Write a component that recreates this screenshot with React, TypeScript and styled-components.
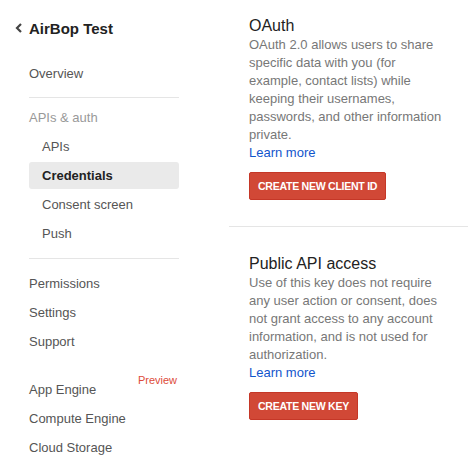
import * as React from "react";
import styled, { createGlobalStyle } from "styled-components";

const GlobalStyle = createGlobalStyle`
  body {
    margin: 0;
    background: #fff;
    font-family: "Liberation Sans", Arial, sans-serif;
  }
`;

const Page = styled.div`
  display: flex;
  width: 468px;
  height: 462px;
  overflow: hidden;
`;

const Sidebar = styled.nav`
  width: 229px;
  flex-shrink: 0;
  padding-left: 29px;
  box-sizing: border-box;
`;

const Header = styled.div`
  display: flex;
  align-items: center;
  height: 20px;
  margin: 18px 0 0 -14px;
  font-size: 15px;
  font-weight: bold;
  color: #222;
`;

const Back = styled.svg`
  width: 8px;
  height: 10px;
  margin-right: 6px;
`;

const Menu = styled.div`
  width: 150px;
  margin-top: 21px;
`;

const Item = styled.div<{ $sub?: boolean; $active?: boolean; $muted?: boolean }>`
  position: relative;
  height: 29px;
  line-height: 29px;
  font-size: 13px;
  padding-left: ${p => (p.$sub ? "13px" : "0")};
  color: ${p => (p.$muted ? "#999" : p.$active ? "#222" : "#555")};
  font-weight: ${p => (p.$active ? "bold" : "normal")};
  background: ${p => (p.$active ? "#eaeaea" : "transparent")};
  border-radius: 3px;
  ${p => (p.$active ? "height: 27px; line-height: 27px; margin: 1px 0;" : "")}
`;

const Divider = styled.div<{ $top: number; $bottom: number }>`
  height: 1px;
  background: #e5e5e5;
  margin: ${p => `${p.$top}px 0 ${p.$bottom}px`};
`;

const Gap = styled.div`
  height: 19px;
`;

const Badge = styled.span`
  position: absolute;
  right: 2px;
  top: -9px;
  font-size: 11px;
  color: #dd4b39;
  font-weight: normal;
`;

const Main = styled.main`
  flex: 1;
`;

const Section = styled.section<{ $divided?: boolean }>`
  padding: 16px 0 0 20px;
  height: ${p => (p.$divided ? "210px" : "auto")};
  border-bottom: ${p => (p.$divided ? "1px solid #e5e5e5" : "none")};
  ${p => (p.$divided ? "" : "padding-top: 27px;")}
`;

const Title = styled.h2`
  margin: 0;
  font-size: 16px;
  line-height: 20px;
  font-weight: normal;
  color: #222;
`;

const Desc = styled.p`
  margin: 0;
  width: 200px;
  font-size: 13px;
  line-height: 18px;
  color: #777;
`;

const Link = styled.a`
  display: block;
  font-size: 13px;
  line-height: 18px;
  color: #15c;
  text-decoration: none;
`;

const Button = styled.button`
  margin-top: 10px;
  height: 28px;
  padding: 0 8px;
  border: 1px solid #c53727;
  border-radius: 2px;
  background: #d14836;
  color: #fff;
  font-family: "Liberation Sans", Arial, sans-serif;
  font-size: 10.6px;
  letter-spacing: -0.3px;
  font-weight: bold;
  text-transform: uppercase;
  cursor: pointer;
`;

export default function App() {
  return (
    <Page>
      <GlobalStyle />
      <Sidebar>
        <Header>
          <Back viewBox="0 0 8 10">
            <polyline points="6,1 2,5 6,9" fill="none" stroke="#444" strokeWidth="2.2" />
          </Back>
          AirBop Test
        </Header>
        <Menu>
          <Item>Overview</Item>
          <Divider $top={9} $bottom={5} />
          <Item $muted>APIs &amp; auth</Item>
          <Item $sub>APIs</Item>
          <Item $sub $active>Credentials</Item>
          <Item $sub>Consent screen</Item>
          <Item $sub>Push</Item>
          <Divider $top={10} $bottom={10} />
          <Item>Permissions</Item>
          <Item>Settings</Item>
          <Item>Support</Item>
          <Gap />
          <Item>
            App Engine
            <Badge>Preview</Badge>
          </Item>
          <Item>Compute Engine</Item>
          <Item>Cloud Storage</Item>
        </Menu>
      </Sidebar>
      <Main>
        <Section $divided>
          <Title>OAuth</Title>
          <Desc>
            OAuth 2.0 allows users to share specific data with you (for example, contact lists) while
            keeping their usernames, passwords, and other information private.
          </Desc>
          <Link href="#">Learn more</Link>
          <Button>Create new Client ID</Button>
        </Section>
        <Section>
          <Title>Public API access</Title>
          <Desc>
            Use of this key does not require any user action or consent, does not grant access to any
            account information, and is not used for authorization.
          </Desc>
          <Link href="#">Learn more</Link>
          <Button>Create new Key</Button>
        </Section>
      </Main>
    </Page>
  );
}
